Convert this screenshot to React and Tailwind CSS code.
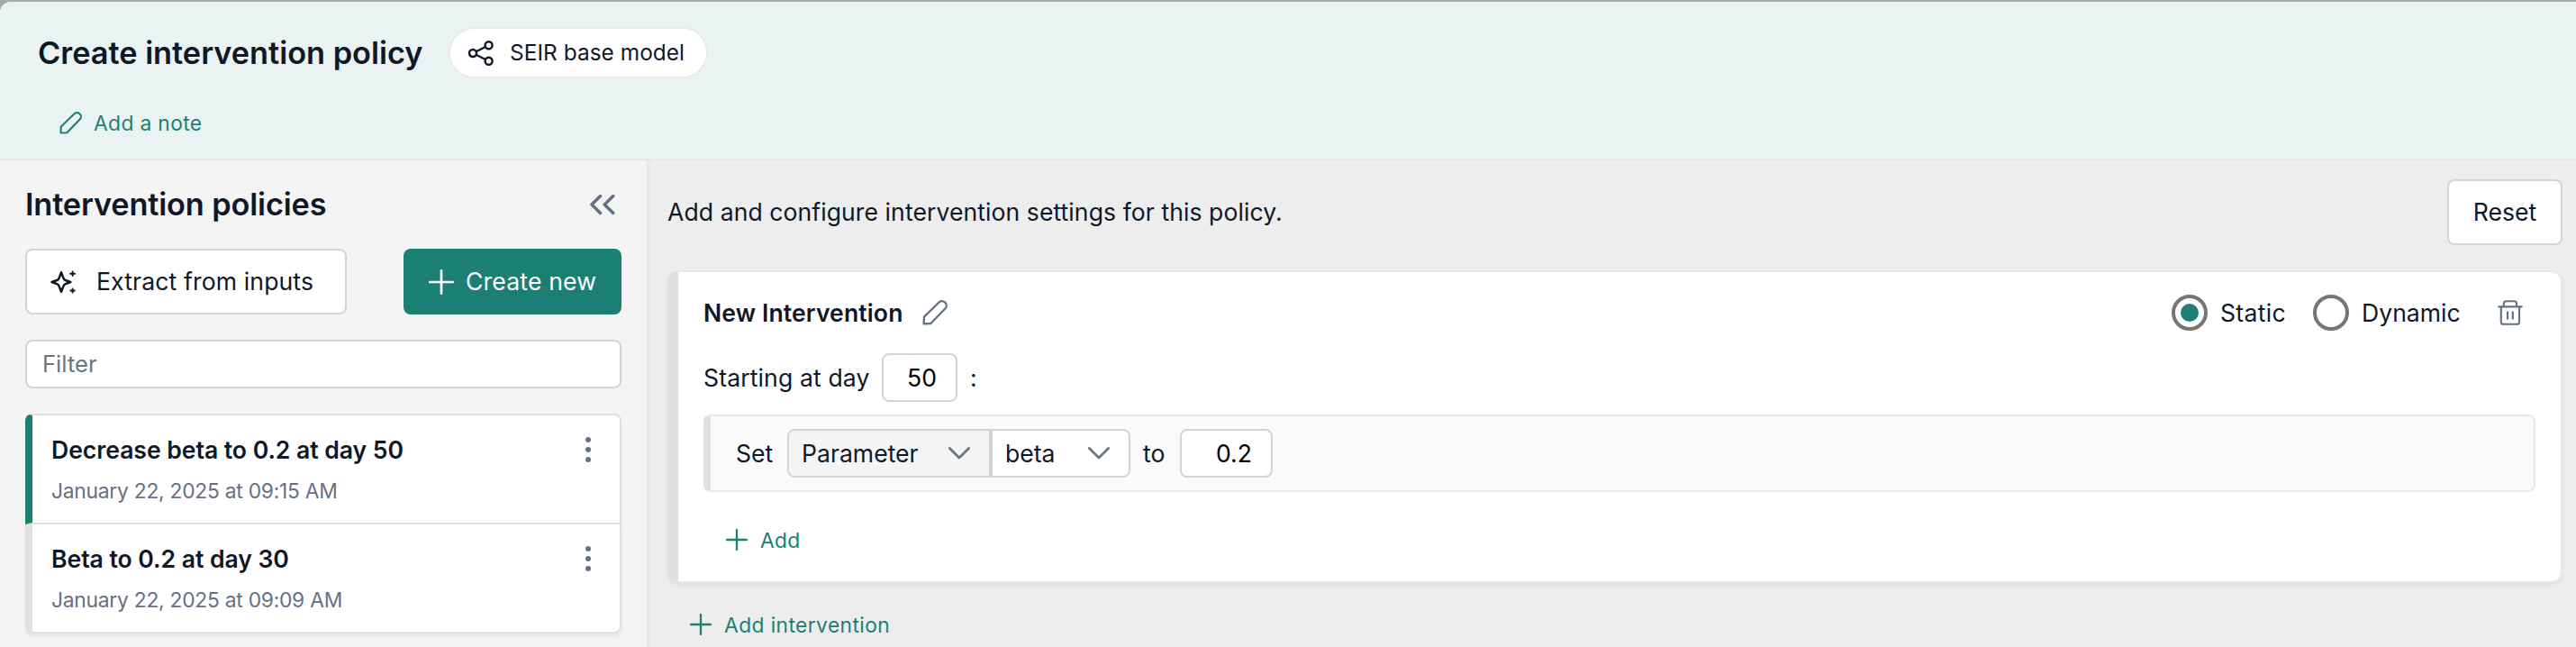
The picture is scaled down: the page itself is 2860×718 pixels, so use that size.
import React from "react";

function Pencil({ className }) {
  return (
    <svg viewBox="0 0 28 28" className={className} fill="none" stroke="currentColor" strokeWidth="2.3" strokeLinejoin="round">
      <path d="M1.6 26.4 L2 18.6 L18.8 2.2 C20.5 0.8 23.3 0.8 25 2.4 L25.6 3 C27.2 4.7 27.2 7.5 25.6 9.2 L9.4 26 Z" />
    </svg>
  );
}

function Plus({ className }) {
  return (
    <svg viewBox="0 0 28 28" className={className} fill="none" stroke="currentColor" strokeWidth="2.7" strokeLinecap="round">
      <path d="M14 1.3V26.7M1.3 14H26.7" />
    </svg>
  );
}

function Share() {
  return (
    <svg viewBox="0 0 28 28" className="size-7 shrink-0" fill="none" stroke="currentColor" strokeWidth="2.4">
      <circle cx="5" cy="14" r="4" />
      <circle cx="22.6" cy="5.2" r="4" />
      <circle cx="22.6" cy="22.8" r="4" />
      <path d="M8.6 12.2L19 7M8.6 15.8L19 21" />
    </svg>
  );
}

function Sparkles() {
  return (
    <svg viewBox="0 0 28 28" className="size-7 shrink-0" fill="none" stroke="currentColor" strokeWidth="2.5" strokeLinejoin="round" strokeLinecap="round">
      <path d="M12 3.2 L14.4 9.6 Q15 11.3 16.7 12 L22.3 14 L16.7 16.2 Q15 16.9 14.4 18.6 L12 24.8 L9.6 18.6 Q9 16.9 7.3 16.2 L1.5 14 L7.3 12 Q9 11.3 9.6 9.6 Z" />
      <path d="M24.6 2.4V7M22.2 4.7H27M24.6 21.4V25.6M22.4 23.5H26.8" strokeWidth="2" />
    </svg>
  );
}

function DoubleLeft() {
  return (
    <svg viewBox="0 0 28 24" className="h-6 w-7 text-[#667085]" fill="none" stroke="currentColor" strokeWidth="3.5" strokeLinecap="round" strokeLinejoin="round">
      <path d="M11.6 2.6L2 12L11.6 21.4M25.8 2.6L16.2 12L25.8 21.4" />
    </svg>
  );
}

function Chevron() {
  return (
    <svg viewBox="0 0 24 14" className="h-3.5 w-6 shrink-0 text-[#6b7785]" fill="none" stroke="currentColor" strokeWidth="2.8" strokeLinecap="round" strokeLinejoin="round">
      <path d="M1.4 1.4L12 12L22.6 1.4" />
    </svg>
  );
}

function Trash() {
  return (
    <svg viewBox="0 0 28 28" className="size-7 text-[#667085]" fill="none" stroke="currentColor" strokeWidth="2.1" strokeLinecap="round" strokeLinejoin="round">
      <path d="M1.2 7.4H26.8M3.8 7.4V24.2Q3.8 26.8 6.4 26.8H21.4Q24 26.8 24 24.2V7.4M6.8 7.2V4Q6.8 1.2 9.6 1.2H18.4Q21 1.2 21 4V7.2M11 13.4V20.8M16.8 13.4V20.8" />
    </svg>
  );
}

function Dots() {
  return (
    <div className="flex flex-col gap-[5px] pt-[24px]">
      <span className="h-[6px] w-[6px] rounded-full bg-[#667085]" />
      <span className="h-[6px] w-[6px] rounded-full bg-[#667085]" />
      <span className="h-[6px] w-[6px] rounded-full bg-[#667085]" />
    </div>
  );
}

function Policy({ title, date, selected }) {
  return (
    <div
      className={
        selected
          ? "flex h-[123px] justify-between rounded-t-lg border-2 border-l-8 border-[#e0e0e0] border-l-[#1b8073] bg-white pr-8 pl-[21px]"
          : "flex h-[121px] justify-between rounded-b-lg border-2 border-t-0 border-l-8 border-[#e0e0e0] bg-white pr-8 pl-[21px] shadow-[0_3px_4px_rgba(0,0,0,0.06)]"
      }
    >
      <div className={selected ? "flex flex-col pt-[20px]" : "flex flex-col pt-[20px]"}>
        <div className="text-[26.6px] leading-[36px] font-semibold tracking-[-0.05px]">{title}</div>
        <div className="mt-[13px] text-[22.8px] leading-[30px] tracking-[-0.25px] text-[#667085]">{date}</div>
      </div>
      <Dots />
    </div>
  );
}

export default function App() {
  return (
    <div className="h-[718px] w-full overflow-hidden bg-[#a9a9a9] pt-0.5 font-['Inter',sans-serif] text-[26.6px] leading-[36px] whitespace-nowrap text-[#101828]">
      <div className="flex h-[716px] flex-col overflow-hidden rounded-tl-xl bg-[#ededed]">
        <header className="h-[176px] shrink-0 border-b-2 border-[#e8e8e8] bg-[#eaf3f2] pt-7">
          <div className="flex h-[57px] items-center pl-[42px]">
            <h1 className="w-[456px] text-[34.3px] font-semibold">Create intervention policy</h1>
            <div className="flex h-[57px] w-[288px] items-center rounded-full border-2 border-[#e9eaeb] bg-white pl-5 text-[24.4px]">
              <Share />
              <span className="pb-px pl-[18px] tracking-[0.05px]">SEIR base model</span>
            </div>
          </div>
          <div className="mt-[35px] flex h-7 items-center gap-[13px] pl-[66px] text-[22.8px] tracking-[0.35px] text-[#1b8073]">
            <Pencil className="size-[25px]" />
            <span className="pt-px">Add a note</span>
          </div>
        </header>

        <div className="flex min-h-0 grow">
          <aside className="flex w-[722px] shrink-0 flex-col border-r-4 border-[#e9e9e9] bg-[#f4f4f4] px-7 pt-[21px]">
            <div className="flex h-14 items-center justify-between pr-[7px]">
              <h2 className="text-[34.3px] font-semibold tracking-[-0.14px]">Intervention policies</h2>
              <DoubleLeft />
            </div>
            <div className="mt-[21px] flex justify-between">
              <button className="flex h-[73px] w-[357px] items-center rounded-lg border-2 border-[#d0d5dd] bg-white pl-[26px]">
                <Sparkles />
                <span className="pb-px pl-[23px] tracking-[0.12px]">Extract from inputs</span>
              </button>
              <button className="flex h-[73px] w-[242px] items-center rounded-lg bg-[#1b8073] pl-7 text-white">
                <Plus className="size-7" />
                <span className="pb-px pl-[13px] tracking-[0.15px]">Create new</span>
              </button>
            </div>
            <div className="mt-7 flex h-[54px] items-center rounded-lg border-2 border-[#d0d5dd] bg-white pl-[17px] text-[25.6px] text-[#6c757d]">Filter</div>
            <div className="mt-7">
              <Policy title="Decrease beta to 0.2 at day 50" date="January 22, 2025 at 09:15 AM" selected />
              <Policy title="Beta to 0.2 at day 30" date="January 22, 2025 at 09:09 AM" />
            </div>
          </aside>

          <main className="grow pt-[21px] pr-[15px] pl-[19px]">
            <div className="flex h-[73px] items-center justify-between">
              <p className="pb-px tracking-[0.06px]">Add and configure intervention settings for this policy.</p>
              <button className="flex h-[73px] w-[128px] items-center justify-center rounded-lg border-2 border-[#d0d5dd] bg-white pb-px">Reset</button>
            </div>

            <section className="mt-7 h-[347px] rounded-xl border-2 border-l-[12px] border-[#e8e8e8] border-l-[#e0e0e0] bg-white px-7 pt-[18px] shadow-[0_3px_4px_rgba(0,0,0,0.05)]">
              <div className="flex h-[54px] items-center">
                <h3 className="w-[243px] font-semibold tracking-[0.1px]">New Intervention</h3>
                <Pencil className="size-7 text-[#667085]" />
                <div className="ml-auto flex items-center pr-[14px]">
                  <span className="flex size-10 items-center justify-center rounded-full border-4 border-[#767676]">
                    <span className="size-5 rounded-full bg-[#1b8073]" />
                  </span>
                  <span className="w-[117px] pl-[14px] tracking-[0.3px]">Static</span>
                  <span className="size-10 rounded-full border-4 border-[#767676]" />
                  <span className="w-[165px] pl-[14px]">Dynamic</span>
                  <Trash />
                </div>
              </div>

              <div className="mt-[18px] flex h-[54px] items-center">
                <span className="w-[198px] tracking-[0.12px]">Starting at day</span>
                <span className="flex h-[54px] w-[84px] items-center rounded-lg border-2 border-[#d0d5dd] bg-white pb-px pl-[26px] text-black">50</span>
                <span className="pl-[14px]">:</span>
              </div>

              <div className="mt-[14px] flex h-[86px] items-center rounded-lg border-2 border-l-8 border-[#e8e8e8] border-l-[#e0e0e0] bg-[#fafafa]">
                <span className="w-[85px] pl-7">Set</span>
                <div className="flex h-[54px] w-[226px] items-center justify-between rounded-l-lg border-2 border-[#d0d5dd] bg-[#f4f4f4] pr-[21px] pl-[14px]">
                  <span>Parameter</span>
                  <Chevron />
                </div>
                <div className="flex h-[54px] w-[155px] items-center justify-between rounded-r-lg border-2 border-[#d0d5dd] bg-white pr-[21px] pl-[14px]">
                  <span>beta</span>
                  <Chevron />
                </div>
                <span className="w-[55px] pl-[14px]">to</span>
                <span className="flex h-[54px] w-[103px] items-center rounded-lg border-2 border-[#d0d5dd] bg-white pb-px pl-[38px] text-black">0.2</span>
              </div>

              <div className="mt-[39px] flex h-7 items-center gap-[14px] pl-[25px] text-[22.8px] tracking-[0.3px] text-[#1b8073]">
                <Plus className="size-6" />
                <span className="pt-px">Add</span>
              </div>
            </section>

            <div className="mt-8 flex h-7 items-center gap-[14px] pl-[25px] text-[22.8px] tracking-[0.4px] text-[#1b8073]">
              <Plus className="size-6" />
              <span className="pt-px">Add intervention</span>
            </div>
          </main>
        </div>
      </div>
    </div>
  );
}
